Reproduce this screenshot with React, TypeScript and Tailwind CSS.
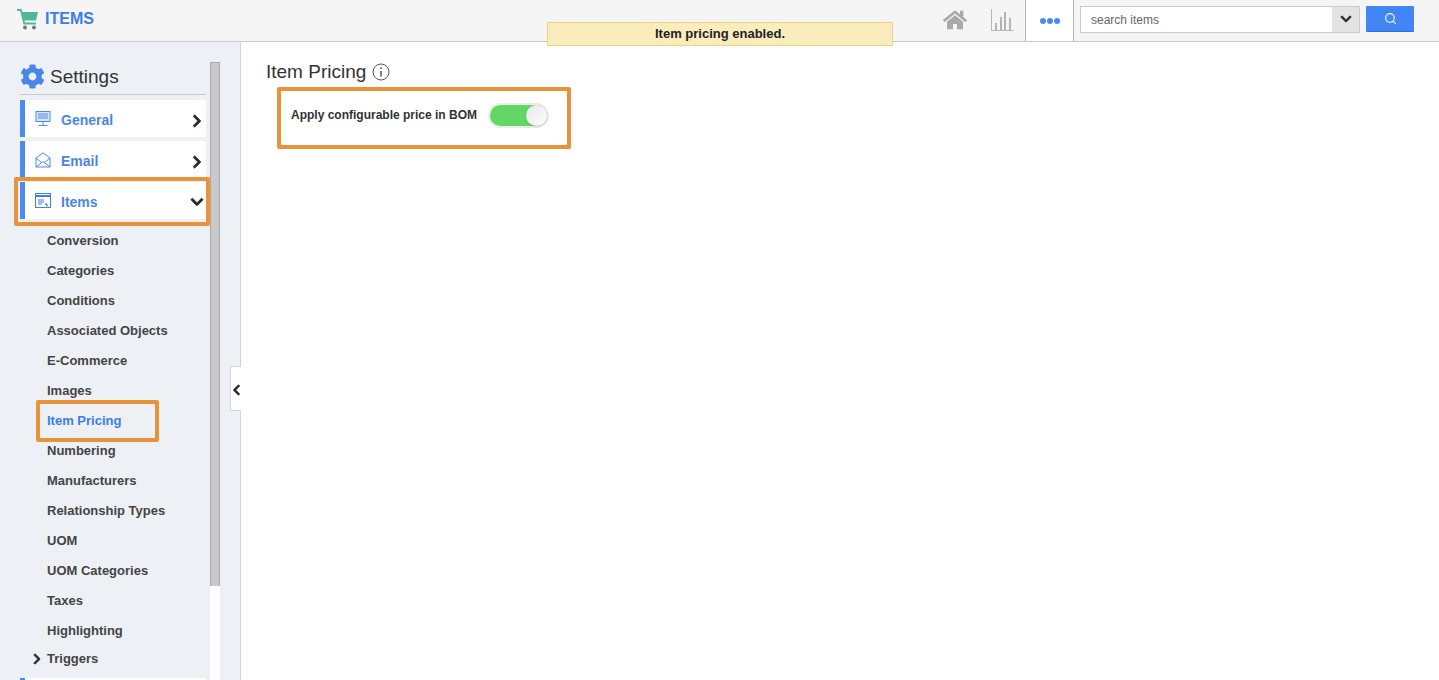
import React from "react";
import { FaCog, FaHome, FaChevronRight, FaChevronDown, FaChevronLeft } from "react-icons/fa";
import { FiSearch } from "react-icons/fi";

const subItems = [
  "Conversion",
  "Categories",
  "Conditions",
  "Associated Objects",
  "E-Commerce",
  "Images",
  "Item Pricing",
  "Numbering",
  "Manufacturers",
  "Relationship Types",
  "UOM",
  "UOM Categories",
  "Taxes",
  "Highlighting",
];

const CartIcon = () => (
  <svg width="22" height="22" viewBox="0 0 22 22">
    <path d="M0 1h4.5l1 3H21l-2 8.5H7.5l.5 2h11v2H6.5L3.2 3H0z" fill="#4cb99b" />
    <circle cx="8" cy="19.5" r="2" fill="#777" />
    <circle cx="17" cy="19.5" r="2" fill="#777" />
  </svg>
);

const ChartIcon = () => (
  <svg width="23" height="23" viewBox="0 0 23 23" fill="#b5b5b5">
    <rect x="0" y="0" width="1" height="22" />
    <rect x="0" y="21" width="23" height="1" />
    <rect x="4" y="14" width="2" height="7" />
    <rect x="9" y="8" width="2" height="13" />
    <rect x="13" y="3" width="2" height="18" />
    <rect x="18" y="9" width="2" height="12" />
  </svg>
);

const MonitorIcon = () => (
  <svg width="16" height="16" viewBox="0 0 16 16" fill="none" stroke="#4a8af4" strokeWidth="1">
    <rect x="1" y="0.5" width="14" height="10" fill="#dbe7fc" />
    <path d="M3 3h10M3 5h10M3 7h10M8 11v3M3.5 14.5h9" />
  </svg>
);

const MailIcon = () => (
  <svg width="16" height="16" viewBox="0 0 16 16" fill="none" stroke="#4a8af4" strokeWidth="1">
    <path d="M1 6 8 .8 15 6v9H1zM1 6l5.5 4.5M15 6 9.5 10.5M1 15l7-5.5 7 5.5" />
  </svg>
);

const WindowIcon = () => (
  <svg width="16" height="16" viewBox="0 0 16 16" fill="none" stroke="#3f7fe8" strokeWidth="1">
    <rect x="0.5" y="0.5" width="15" height="14" />
    <path d="M1 3h14" strokeWidth="2" />
    <path d="M3 7h6M3 9h6M3 11h4" />
    <path d="M10.5 10.5l2 2.5" strokeWidth="1.5" />
  </svg>
);

const InfoIcon = () => (
  <svg width="18" height="18" viewBox="0 0 18 18" fill="none" stroke="#555" strokeWidth="1">
    <circle cx="9" cy="9" r="8" />
    <path d="M9 8v5.5" strokeWidth="1.5" />
    <circle cx="9" cy="5.2" r="0.9" fill="#555" stroke="none" />
  </svg>
);

const NavCard = ({ icon, label, open }: { icon: React.ReactNode; label: string; open?: boolean }) => (
  <div className="flex h-[37px] w-[186px] items-center border-l-[5px] border-[#4a8af4] bg-white pl-[10px] pr-[3px]">
    <span className="flex w-[26px] shrink-0">{icon}</span>
    <span className="flex-1 pt-[3px] text-[14px] font-bold text-[#4a86e8]">{label}</span>
    {open ? (
      <FaChevronDown size={14} className="mr-[-1px] mt-[3px] stroke-[30] text-[#2b2b2b]" />
    ) : (
      <FaChevronRight size={14} className="mr-[-1px] mt-[5px] stroke-[30] text-[#2b2b2b]" />
    )}
  </div>
);

export default function App() {
  return (
    <div className="relative flex h-[680px] w-[1439px] flex-col overflow-hidden bg-white font-['Liberation_Sans',Arial,sans-serif] text-[#333]">
      {/* top bar */}
      <header className="flex h-[42px] shrink-0 items-center border-b border-[#c9c9c9] bg-[#f5f5f5]">
        <div className="ml-[17px] mt-[-4px] flex items-center gap-[6px]">
          <CartIcon />
          <span className="pt-[1px] text-[16px] font-bold text-[#3b7ded]">ITEMS</span>
        </div>
        <div className="ml-auto flex h-full items-center">
          <FaHome size={24} className="mb-[1px] mr-[24px] text-[#a9a9a9]" />
          <div className="mr-[11px]">
            <ChartIcon />
          </div>
          <div className="flex h-full w-[49px] items-center justify-center gap-[1px] border-x border-[#b5b5b5] bg-white">
            <span className="h-[6px] w-[6px] rounded-full bg-[#4a8af4]" />
            <span className="h-[6px] w-[6px] rounded-full bg-[#4a8af4]" />
            <span className="h-[6px] w-[6px] rounded-full bg-[#4a8af4]" />
          </div>
          <div className="ml-[6px] mt-[-3px] flex h-[27px] w-[280px] border border-[#c9c9c9] bg-white">
            <span className="flex-1 pl-[10px] text-[12px] leading-[27px] text-[#666]">search items</span>
            <span className="flex w-[27px] items-center justify-center bg-[#e3e3e3]">
              <FaChevronDown size={12} className="stroke-[30] text-[#2b2b2b]" />
            </span>
          </div>
          <button className="ml-[6px] mr-[25px] mt-[-3px] flex h-[26px] w-[48px] items-center justify-center rounded-[1px] border-b border-[#2f6fdc] bg-[#4285f4]">
            <FiSearch size={13} className="text-white" />
          </button>
        </div>
      </header>

      <div className="flex min-h-0 flex-1">
        {/* sidebar */}
        <aside className="flex w-[241px] shrink-0 overflow-hidden border-r border-[#d5d5d5] bg-[#edf0f5]">
          <div className="w-[210px] shrink-0 pl-[20px]">
            <div className="flex h-[53px] w-[186px] items-center gap-[5px] border-b border-[#c9c9c9] pt-[16px]">
              <FaCog size={25} className="text-[#4a86e8]" />
              <span className="pt-[2px] text-[19px] leading-[24px] text-[#333]">Settings</span>
            </div>
            <div className="mt-[5px] flex flex-col gap-[4px]">
              <NavCard icon={<MonitorIcon />} label="General" />
              <NavCard icon={<MailIcon />} label="Email" />
              <NavCard icon={<WindowIcon />} label="Items" open />
            </div>
            <ul className="mt-[6px]">
              {subItems.map((item) => (
                <li
                  key={item}
                  className={`flex h-[30px] items-center pl-[27px] pt-[2px] text-[13px] font-bold ${
                    item === "Item Pricing" ? "text-[#3b7ded]" : "text-[#444]"
                  }`}
                >
                  {item}
                </li>
              ))}
              <li className="flex h-[27px] items-center text-[13px] font-bold text-[#444]">
                <FaChevronRight size={12} className="ml-[11px] mr-[4px] stroke-[30] text-[#2b2b2b]" />
                Triggers
              </li>
            </ul>
            <div className="mt-[6px] h-[20px] w-[186px] border-l-[5px] border-[#4a8af4] bg-white" />
          </div>
          <div className="mt-[20px] w-[10px] shrink-0 bg-white">
            <div className="h-[524px] border-x border-t border-[#a9a9a9] bg-[#c9c9c9]" />
          </div>
        </aside>

        {/* content */}
        <main className="flex-1 pl-[25px] pt-[19px]">
          <div className="flex items-center gap-[6px]">
            <h1 className="text-[19px] leading-[22px] text-[#333]">Item Pricing</h1>
            <InfoIcon />
          </div>
          <div className="ml-[25px] mt-[17px] flex h-[30px] items-center">
            <span className="text-[12px] font-bold text-[#333]">Apply configurable price in BOM</span>
            <span className="ml-[11px] flex h-[25px] w-[61px] items-center justify-end rounded-full border-2 border-[#ececec] bg-[#62d766]">
              <span className="h-[21px] w-[21px] rounded-full bg-gradient-to-br from-[#e6e6e6] to-white shadow" />
            </span>
          </div>
        </main>
      </div>

      {/* collapse handle */}
      <div className="absolute left-[230px] top-[366px] flex h-[45px] w-[11px] items-center justify-end border border-r-0 border-[#d5d5d5] bg-white">
        <FaChevronLeft size={12} className="mr-[-1px] mt-[2px] stroke-[30] text-[#2b2b2b]" />
      </div>

      {/* toast */}
      <div className="absolute left-[547px] top-[22px] flex h-[24px] w-[346px] items-center justify-center border border-[#f3d27c] bg-[#faedbd] text-[13px] font-bold text-[#222]">
        Item pricing enabled.
      </div>

      {/* annotation boxes */}
      <div className="absolute left-[14px] top-[177px] h-[49px] w-[196px] rounded-[2px] border-[4px] border-[#e8923a]" />
      <div className="absolute left-[36px] top-[400px] h-[42px] w-[123px] rounded-[2px] border-[4px] border-[#e8923a]" />
      <div className="absolute left-[277px] top-[87px] h-[62px] w-[294px] rounded-[2px] border-[4px] border-[#e8923a]" />
    </div>
  );
}
